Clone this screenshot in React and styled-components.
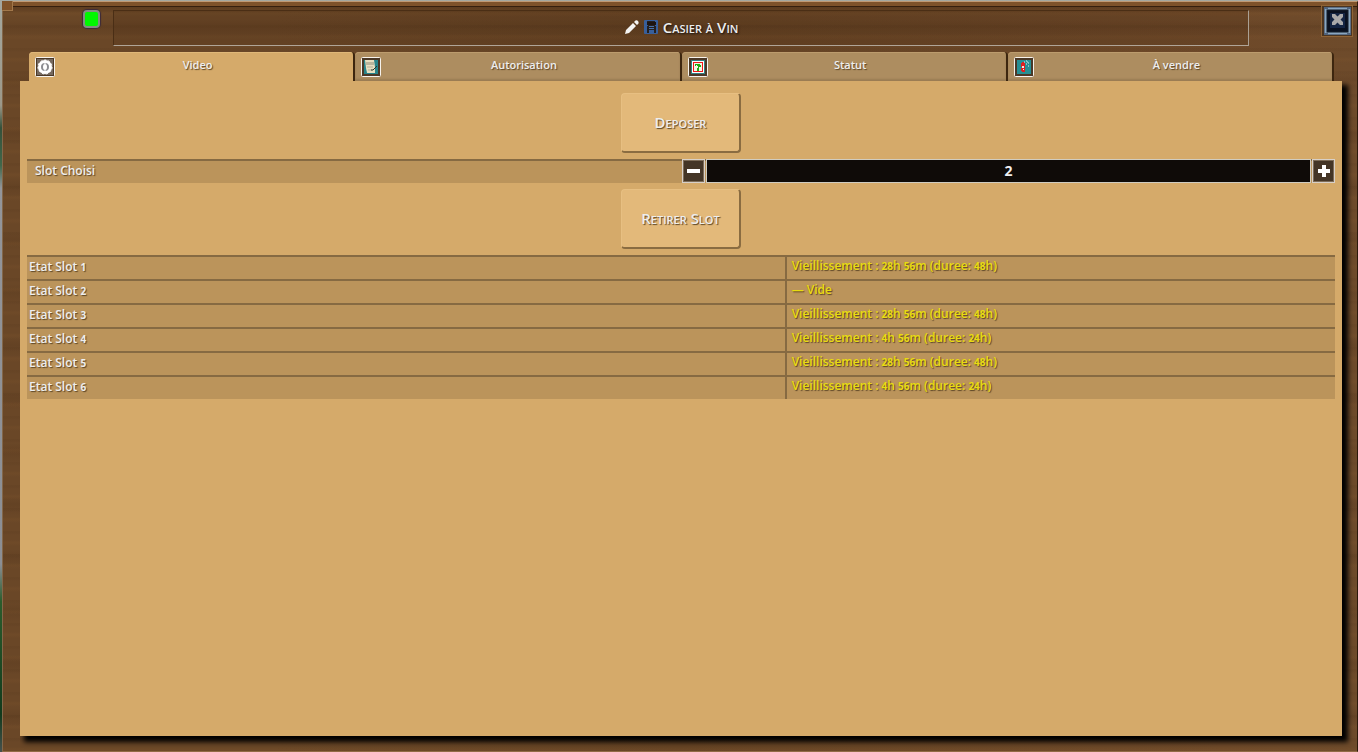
import React, { useState } from "react";
import styled, { createGlobalStyle } from "styled-components";

const Global = createGlobalStyle`
  *, *::before, *::after { box-sizing: border-box; }
  body {
    margin: 0;
    background: #6b4727;
    font-family: "Open Sans", "Noto Sans", sans-serif;
    font-size: 12px;
    font-weight: 600;
    line-height: 16px;
    color: #eee;
  }
  button, input { font: inherit; color: inherit; }
`;

const Edge = styled.div`
  display: flex;
  min-height: 100vh;
  padding-left: 2px;
  background: linear-gradient(#a4a8a0 0, #9c9889 14%, #35513a 17%, #41674a 22%, #93959a 25%, #8b8e94 75%, #2b5c2c 80%, #123a1c 95%, #47514e 100%);
`;

const Frame = styled.main`
  position: relative;
  flex: 1;
  min-width: 0;
  display: flex;
  flex-direction: column;
  margin-top: 1px;
  padding: 0 15px 15px 17px;
  border: 1px solid #83674a;
  border-color: #c09872 #2c1a0c #916b46 #83674a;
  background:
    linear-gradient(#7e522a, #7e522a) 0 0 / 100% 4px no-repeat,
    linear-gradient(#351f0e, #351f0e) 0 4px / 100% 1px no-repeat,
    linear-gradient(rgba(66, 38, 16, .3), transparent) 0 5px / 100% 6px no-repeat,
    repeating-linear-gradient(180deg, rgba(45, 24, 8, .05) 0 2px, transparent 4px 9px, rgba(150, 100, 50, .1) 11px 12px, transparent 15px 23px),
    repeating-linear-gradient(180deg, transparent 0 17px, rgba(45, 24, 8, .1) 25px, transparent 37px 53px),
    linear-gradient(90deg, #6a4727 0, #6a4727 20%, #654324 50%, #6e4929 90%, #6e4b2b 100%);
`;

const Corner = styled.span`
  position: absolute;
  left: -1px;
  top: -1px;
  width: 11px;
  height: 10px;
  background: #805329;
  border: solid #a2784b;
  border-width: 0 1px 1px 0;
`;

const Header = styled.header`
  display: flex;
  align-items: flex-start;
  height: 50px;
  padding: 8px 0 0 63px;
`;

const Light = styled.span`
  flex: none;
  width: 17px;
  height: 18px;
  margin-right: 13px;
  background: #00f800;
  border: 2px solid #829080;
  border-radius: 4px;
  box-shadow: 0 0 1px 1px #3c2a3a;
`;

const TitleBox = styled.div`
  flex: 1;
  display: flex;
  align-items: center;
  justify-content: center;
  gap: 5px;
  height: 36px;
  margin-right: 93px;
  padding-bottom: 2px;
  border: 1px solid;
  border-color: #4a2e15 #aaa094 #b0a598 #4a2e15;
  background: rgba(50, 28, 8, .12);
`;

const Title = styled.h1`
  margin: 0;
  font-size: 15px;
  line-height: 18px;
  font-weight: 600;
  font-variant: small-caps;
  text-shadow: 1px 1px 2px #111;
`;

const Close = styled.button`
  position: absolute;
  right: 4px;
  top: 3px;
  width: 32px;
  height: 32px;
  padding: 0;
  border: 1px solid #8f6436;
  background: #4b341f;
  svg { display: block; }
`;

const Tabs = styled.nav`
  display: grid;
  grid-template-columns: repeat(4, 1fr);
  margin: 0 8px 0 9px;
`;

const Tab = styled.button`
  display: flex;
  align-items: flex-start;
  height: 29px;
  padding: 5px 14px 0 6px;
  border: 0;
  border-right: 2px solid #3d260f;
  border-radius: 4px 4px 0 0;
  background: ${(p) => (p.$active ? "#d5aa6a" : "#ad8d60")};
  box-shadow: ${(p) => (p.$active ? "inset 0 1px #e0b879" : "inset 0 1px #bc9c6e, inset 0 -2px 2px #9a7c53")};
  svg { flex: none; }
`;

const TabLabel = styled.span`
  flex: 1;
  font-size: 11px;
  line-height: 16px;
  text-align: center;
  text-shadow: 1px 1px 1px #5c4526;
`;

const Panel = styled.section`
  flex: 1;
  display: flex;
  flex-direction: column;
  align-items: center;
  padding: 12px 7px;
  gap: 6px;
  background: #d5aa6a;
  box-shadow: 5px 5px 5px 1px #000;
  clip-path: inset(0 -14px -14px 0);
`;

const Action = styled.button`
  width: 120px;
  height: 60px;
  padding: 0 0 2px;
  border: solid;
  border-width: 1px 2px 2px 1px;
  border-color: #e7bf82 #8a6c41 #8a6c41 #e7bf82;
  border-radius: 4px;
  background: #e3b97a;
  font-size: 15px;
  font-variant: small-caps;
  text-shadow: 1px 1px 1px #5c4526;
`;

const SlotRow = styled.div`
  display: grid;
  grid-template-columns: 1fr 1fr;
  width: 100%;
  height: 24px;
  background: #bb945b;
  box-shadow: inset 0 2px #866a42;
`;

const SlotLabel = styled.label`
  padding: 4px 8px;
  text-shadow: 1px 1px 1px #5c4526;
`;

const Stepper = styled.div`
  display: flex;
  gap: 1px;
  padding-left: 1px;
`;

const Step = styled.button`
  flex: none;
  display: grid;
  place-items: center;
  width: 23px;
  padding: 0;
  background: #443526;
  border: 1px solid #d8d0c8;
  outline: 1px solid #7d6c58;
  outline-offset: -2px;
`;

const SlotInput = styled.input`
  flex: 1;
  min-width: 0;
  padding: 0;
  border: 1px solid #d0ccc0;
  outline: 0;
  background: #0f0b08;
  font-size: 14px;
  font-weight: 700;
  text-align: center;
`;

const States = styled.table`
  width: 100%;
  table-layout: fixed;
  border-collapse: collapse;
  background: #bb945b;
`;

const StateRow = styled.tr`
  height: 24px;
  box-shadow: inset 0 2px #866a42;
`;

const StateName = styled.th`
  width: 58%;
  padding: 4px 2px;
  font-weight: 600;
  text-align: left;
  text-shadow: 1px 1px 1px #5c4526;
`;

const StateValue = styled.td`
  padding: 2px 5px 4px;
  border-left: 2px solid #866a42;
  color: #e9dc10;
  text-shadow: 1px 1px 1px #5c4526;
`;

const Digits = styled.span`
  font-size: 10px;
  font-weight: 700;
`;

const Figures = ({ text }) =>
  text.split(/(\d+)/).map((part, i) => (i % 2 ? <Digits key={i}>{part}</Digits> : part));

const IconFrame = ({ children }) => (
  <svg width="21" height="21" viewBox="0 0 21 21" aria-hidden="true">
    <rect x=".5" y=".5" width="19" height="19" rx="1" fill="#4a3827" stroke="#f6f2ec" />
    {children}
  </svg>
);

const VideoIcon = () => (
  <IconFrame>
    <rect x="2" y="2" width="16" height="16" fill="#75695f" />
    <circle cx="10" cy="10" r="5.500" fill="#8b8c90" stroke="#fff" strokeWidth="3" />
    <circle cx="10" cy="10" r="7" fill="none" stroke="#fff" strokeDasharray="2 2" />
    <ellipse cx="10" cy="10" rx="2" ry="3" fill="#fff" />
    <path d="M10 5v2M10 13v2" stroke="#fff" />
  </IconFrame>
);

const AuthIcon = () => (
  <IconFrame>
    <rect x="3" y="3" width="14" height="14" fill="#27858b" />
    <path d="M4 3h9l1 7v6H6l-1-5z" fill="#e6dfc0" />
    <path d="M5 5h8v3H5z" fill="#b9b59c" />
    <path d="M6 10h6M7 13h4" stroke="#b3af96" />
    <path d="M10 13h2l4-4" fill="none" stroke="#26352c" />
  </IconFrame>
);

const StatusIcon = () => (
  <IconFrame>
    <rect x="3" y="3" width="14" height="14" fill="#317f82" />
    <rect x="4" y="4" width="12" height="12" fill="#fff" />
    <rect x="5.500" y="5.500" width="9" height="9" fill="#f3f8e6" stroke="#f01818" />
    <path d="M7 7h5v1h1v2h-2v4H9v-3h1V9H9V8H8v1H7z" fill="#20ad12" />
  </IconFrame>
);

const SaleIcon = () => (
  <IconFrame>
    <rect x="3" y="3" width="14" height="14" fill="#268f93" />
    <path d="M8 5h2v1h1v9H8v-1H7v-3h1v-1H7V6h1z" fill="#de2020" />
    <path d="M8 9h2v2H8zM9 12h1v1H9z" fill="#f6e3dd" />
    <path d="M10 5h1M12 4h1M14 6h1M12 7h1M14 9h1M13 5h1" stroke="#dcefeb" />
  </IconFrame>
);

const Pencil = () => (
  <svg width="15" height="15" viewBox="0 0 15 15" aria-hidden="true">
    <path d="M1 14l1-4 7-7 3 3-7 7zM10 2l1.500-1.500Q13 0 14 1t.5 2.500L13 5z" fill="#f4f4f2" />
  </svg>
);

const Rack = () => (
  <svg width="14" height="14" viewBox="0 0 14 14" aria-hidden="true">
    <rect width="14" height="14" rx="1" fill="#385f9b" />
    <path d="M3 1h8v5h1v7h-2v-3H5v3H3V6h1z" fill="#25201f" />
    <path d="M5 6.500h5M5 8.500h5" stroke="#4871aa" />
    <path d="M3 2h9v3H3z" fill="#1e1410" />
  </svg>
);

const Cross = () => (
  <svg width="30" height="30" viewBox="0 0 30 30" aria-hidden="true">
    <rect x="2" y="1" width="27" height="28" fill="#303b4e" />
    <rect x="3.500" y="2.500" width="24" height="25" fill="#101825" stroke="#8aa6bf" strokeWidth="2" />
    <rect x="6" y="5" width="19" height="20" fill="#0a1120" />
    <rect x="8" y="7" width="15" height="15" fill="#142442" />
    <path d="M2 1h4v2H2zM25 1h4v2h-4zM2 27h4v2H2zM25 27h4v2h-4z" fill="#50637d" />
    <path d="M10 8h3l2.500 2.500L18 8h3v3l-2.500 2.500L21 16v3h-3l-2.500-2.500L13 19h-3v-3l2.500-2.500L10 11z" fill="#aaa9a9" />
  </svg>
);

const Sign = ({ plus }) => (
  <svg width="13" height="13" viewBox="0 0 13 13" aria-hidden="true">
    <path d={plus ? "M5 0h4v4h4v4H9v4H5V8H1V4h4z" : "M0 4h13v4H0z"} fill="#fff" />
  </svg>
);

const TABS = [
  ["Video", VideoIcon],
  ["Autorisation", AuthIcon],
  ["Statut", StatusIcon],
  ["À vendre", SaleIcon],
];

const STATES = [
  "Vieillissement : 28h 56m (duree: 48h)",
  "— Vide",
  "Vieillissement : 28h 56m (duree: 48h)",
  "Vieillissement : 4h 56m (duree: 24h)",
  "Vieillissement : 28h 56m (duree: 48h)",
  "Vieillissement : 4h 56m (duree: 24h)",
];

export default function App() {
  const [tab, setTab] = useState(0);
  const [slot, setSlot] = useState(2);
  const move = (by) => setSlot((s) => Math.min(6, Math.max(1, Number(s) + by)));

  return (
    <Edge>
      <Global />
      <Frame>
        <Corner />
        <Header>
          <Light />
          <TitleBox>
            <Pencil />
            <Rack />
            <Title>Casier à Vin</Title>
          </TitleBox>
          <Close aria-label="Fermer"><Cross /></Close>
        </Header>
        <Tabs role="tablist">
          {TABS.map(([name, Icon], i) => (
            <Tab key={name} role="tab" aria-selected={tab === i} $active={tab === i} onClick={() => setTab(i)}>
              <Icon />
              <TabLabel>{name}</TabLabel>
            </Tab>
          ))}
        </Tabs>
        <Panel role="tabpanel">
          <Action>Deposer</Action>
          <SlotRow>
            <SlotLabel htmlFor="slot">Slot Choisi</SlotLabel>
            <Stepper>
              <Step aria-label="Moins" onClick={() => move(-1)}><Sign /></Step>
              <SlotInput id="slot" value={slot} onChange={(e) => setSlot(e.target.value)} />
              <Step aria-label="Plus" onClick={() => move(1)}><Sign plus /></Step>
            </Stepper>
          </SlotRow>
          <Action>Retirer Slot</Action>
          <States>
            <tbody>
              {STATES.map((value, i) => (
                <StateRow key={i}>
                  <StateName scope="row"><Figures text={`Etat Slot ${i + 1}`} /></StateName>
                  <StateValue><Figures text={value} /></StateValue>
                </StateRow>
              ))}
            </tbody>
          </States>
        </Panel>
      </Frame>
    </Edge>
  );
}
